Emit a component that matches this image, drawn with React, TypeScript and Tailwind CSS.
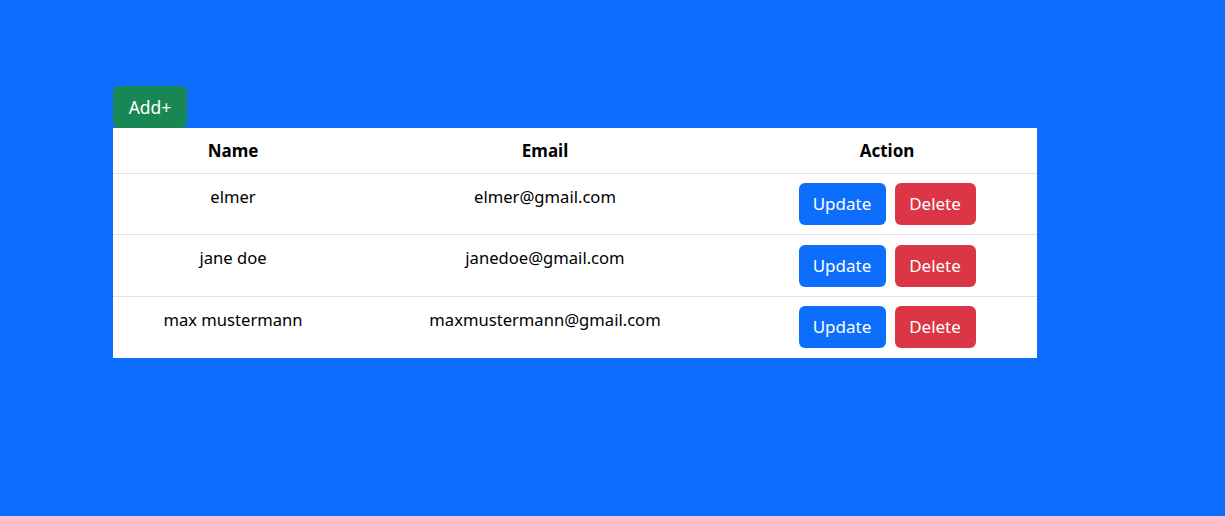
const users = [
  { name: 'elmer', email: 'elmer@gmail.com' },
  { name: 'jane doe', email: 'janedoe@gmail.com' },
  { name: 'max mustermann', email: 'maxmustermann@gmail.com' },
];

export default function App() {
  return (
    <div className="min-h-[516px] w-full bg-[#0d6efd] pt-[86px] pl-[113px] font-['Noto_Sans',sans-serif] text-[#212529]">
      <div className="w-[924px]">
        <button className="h-[42px] w-[74px] rounded-md bg-[#198754] text-[17.5px] text-white">
          Add+
        </button>
        <table className="w-full border-collapse bg-white">
          <colgroup>
            <col className="w-[240px]" />
            <col className="w-[384px]" />
            <col className="w-[300px]" />
          </colgroup>
          <thead>
            <tr className="h-[45px] border-b border-[#dee2e6]">
              <th className="text-[17px] font-bold text-black">Name</th>
              <th className="text-[17px] font-bold text-black">Email</th>
              <th className="text-[17px] font-bold text-black">Action</th>
            </tr>
          </thead>
          <tbody>
            {users.map((u, i) => (
              <tr key={u.email} className={i < users.length - 1 ? 'border-b border-[#dee2e6]' : ''}>
                <td className="pt-[11px] text-center align-top text-[16.6px] text-black">{u.name}</td>
                <td className="pt-[11px] text-center align-top text-[16.6px] text-black">{u.email}</td>
                <td className="py-[9.35px] text-center">
                  <div className="flex justify-center gap-[9px]">
                    <button className="h-[42px] w-[87px] rounded-md bg-[#0d6efd] text-[17px] text-white">
                      Update
                    </button>
                    <button className="h-[42px] w-[81px] rounded-md bg-[#dc3545] text-[17px] text-white">
                      Delete
                    </button>
                  </div>
                </td>
              </tr>
            ))}
          </tbody>
        </table>
      </div>
    </div>
  );
}
